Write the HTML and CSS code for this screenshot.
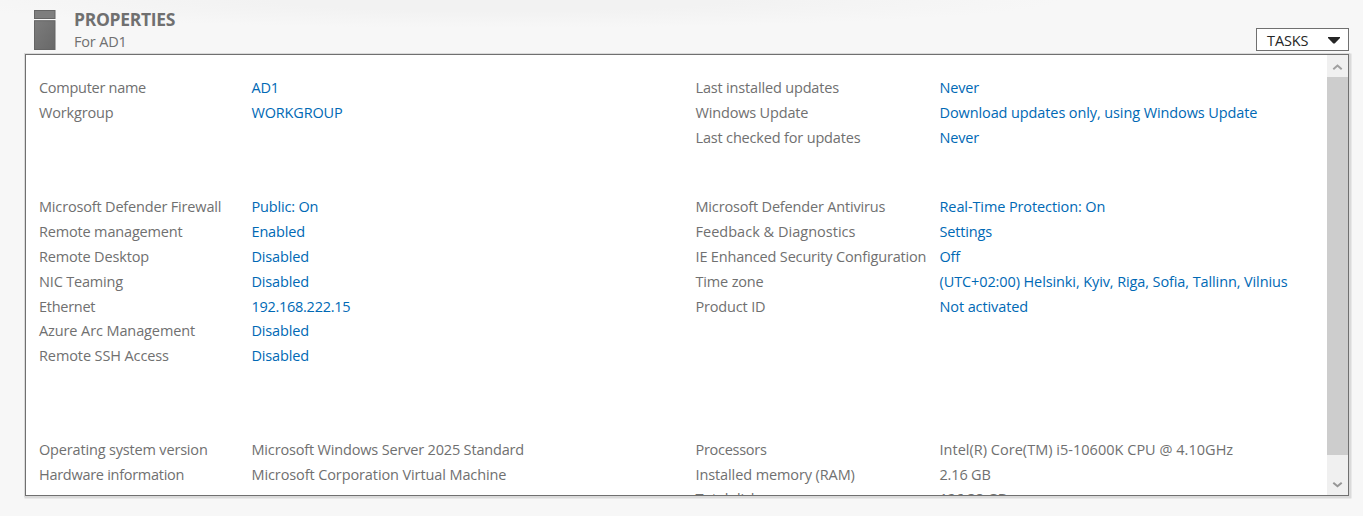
FILE: index.html
```html
<!DOCTYPE html>
<html lang="en">
<head>
<meta charset="utf-8">
<title>Properties</title>
<link rel="stylesheet" href="styles.css">
</head>
<body>
<header class="header">
  <svg class="server-icon" width="22" height="41" viewBox="0 0 22 41">
    <defs><linearGradient id="metal" x1="0" y1="0" x2="1" y2="1"><stop offset="0" stop-color="#7c7c7c"/><stop offset="1" stop-color="#686868"/></linearGradient></defs>
    <rect x=".5" y=".5" width="20.5" height="8" fill="#7e7e7e" stroke="#656565"/>
    <rect x=".5" y="10.7" width="20.5" height="28.8" fill="url(#metal)" stroke="#656565"/>
  </svg>
  <div class="heading">
    <h1 class="title">PROPERTIES</h1>
    <p class="subtitle">For AD1</p>
  </div>
  <button class="tasks"><span>TASKS</span><svg class="caret" width="12" height="7" viewBox="0 0 12 7"><path d="M0 0H12V1L6.7 6.5H5.3L0 1Z" fill="#262626"/></svg></button>
</header>
<main class="panel">
  <div class="content">
    <section class="group first">
      <dl class="list left">
        <dt class="compact">Computer name</dt><dd class="link">AD1</dd>
        <dt>Workgroup</dt><dd class="link">WORKGROUP</dd>
      </dl>
      <dl class="list right">
        <dt>Last installed updates</dt><dd class="link">Never</dd>
        <dt>Windows Update</dt><dd class="link long">Download updates only, using Windows Update</dd>
        <dt>Last checked for updates</dt><dd class="link">Never</dd>
      </dl>
    </section>
    <section class="group second">
      <dl class="list left">
        <dt>Microsoft Defender Firewall</dt><dd class="link">Public: On</dd>
        <dt>Remote management</dt><dd class="link">Enabled</dd>
        <dt>Remote Desktop</dt><dd class="link">Disabled</dd>
        <dt>NIC Teaming</dt><dd class="link">Disabled</dd>
        <dt class="compact">Ethernet</dt><dd class="link address">192.168.222.15</dd>
        <dt class="long">Azure Arc Management</dt><dd class="link">Disabled</dd>
        <dt class="long">Remote SSH Access</dt><dd class="link">Disabled</dd>
      </dl>
      <dl class="list right">
        <dt>Microsoft Defender Antivirus</dt><dd class="link long">Real-Time Protection: On</dd>
        <dt class="wide">Feedback &amp; Diagnostics</dt><dd class="link">Settings</dd>
        <dt>IE Enhanced Security Configuration</dt><dd class="link">Off</dd>
        <dt>Time zone</dt><dd class="link long">(UTC+02:00) Helsinki, Kyiv, Riga, Sofia, Tallinn, Vilnius</dd>
        <dt>Product ID</dt><dd class="link long">Not activated</dd>
      </dl>
    </section>
    <section class="group third">
      <dl class="list left">
        <dt>Operating system version</dt><dd>Microsoft Windows Server 2025 Standard</dd>
        <dt class="compact">Hardware information</dt><dd class="long">Microsoft Corporation Virtual Machine</dd>
      </dl>
      <dl class="list right">
        <dt class="compact">Processors</dt><dd class="wide">Intel(R) Core(TM) i5-10600K CPU @ 4.10GHz</dd>
        <dt class="long">Installed memory (RAM)</dt><dd>2.16 GB</dd>
        <dt class="clipped">Total disk space</dt><dd class="clipped">126.38 GB</dd>
      </dl>
    </section>
  </div>
  <div class="scrollbar">
    <svg class="arrow" width="21" height="21" viewBox="0 0 21 21"><path d="M6.3 13.3L10.5 9.5L14.7 13.3" fill="none" stroke="#a0a0a0" stroke-width="2"/></svg>
    <div class="thumb"></div>
    <svg class="arrow" width="21" height="21" viewBox="0 0 21 21"><path d="M6.3 9.7L10.5 13.3L14.7 9.7" fill="none" stroke="#969696" stroke-width="2"/></svg>
  </div>
</main>
</body>
</html>
```
FILE: styles.css
```css
* { box-sizing: border-box; }
html { height: 100%; overflow: hidden; background: #f7f7f7; }
body {
  margin: 0;
  height: 516px;
  overflow: hidden;
  background: radial-gradient(ellipse 560px 28px at 500px 0, #f2f2f2 40%, #f7f7f7);
  color: #707070;
  font: 14.5px/24.85px "Open Sans", "Noto Sans", sans-serif;
  letter-spacing: -0.17px;
}
.header { display: flex; height: 54px; padding: 10px 14px 0 34px; }
.heading { flex: 1; padding-left: 18px; }
.title { margin: 0; font-size: 17.5px; line-height: 19px; font-weight: 700; letter-spacing: -0.3px; }
.subtitle { margin: 2px 0 0; line-height: 22px; }
.tasks {
  display: flex;
  align-items: center;
  justify-content: space-between;
  width: 93px;
  height: 23px;
  margin-top: 18px;
  padding: 2px 8px 0 10px;
  border: 1px solid #707070;
  background: #fff;
  color: #262626;
  font: 14.5px/20px "Open Sans", "Noto Sans", sans-serif;
  letter-spacing: -0.1px;
}
.caret { margin-bottom: 1px; }
.panel {
  display: flex;
  width: 1324px;
  height: 442px;
  margin-left: 25px;
  border: 1px solid #707070;
  background: #fff;
  box-shadow: 1px 1px 0 1.5px #dadada, 0 0 0 1px #dadada;
}
.content { flex: 1; overflow: hidden; padding: 21.4px 0 0 13px; }
.group { display: grid; grid-template-columns: 656.5px 1fr; }
.first { height: 118.8px; }
.second { height: 243.2px; }
.list { display: grid; grid-auto-rows: 24.85px; align-content: start; margin: 0; white-space: nowrap; }
.left { grid-template-columns: 212.5px 1fr; }
.right { grid-template-columns: 244px 1fr; }
dd { margin: 0; }
.link { color: #0069b5; }
.long { letter-spacing: -0.105px; }
.compact, .address { letter-spacing: -0.28px; }
.wide { letter-spacing: 0.02px; }
.clipped { margin-top: -1px; }
.scrollbar { display: flex; flex-direction: column; width: 21px; padding: 1px 0; background: #f0f0f0; }
.thumb { height: 378px; margin-bottom: auto; background: #cdcdcd; }
.arrow { display: block; flex: none; }
```
